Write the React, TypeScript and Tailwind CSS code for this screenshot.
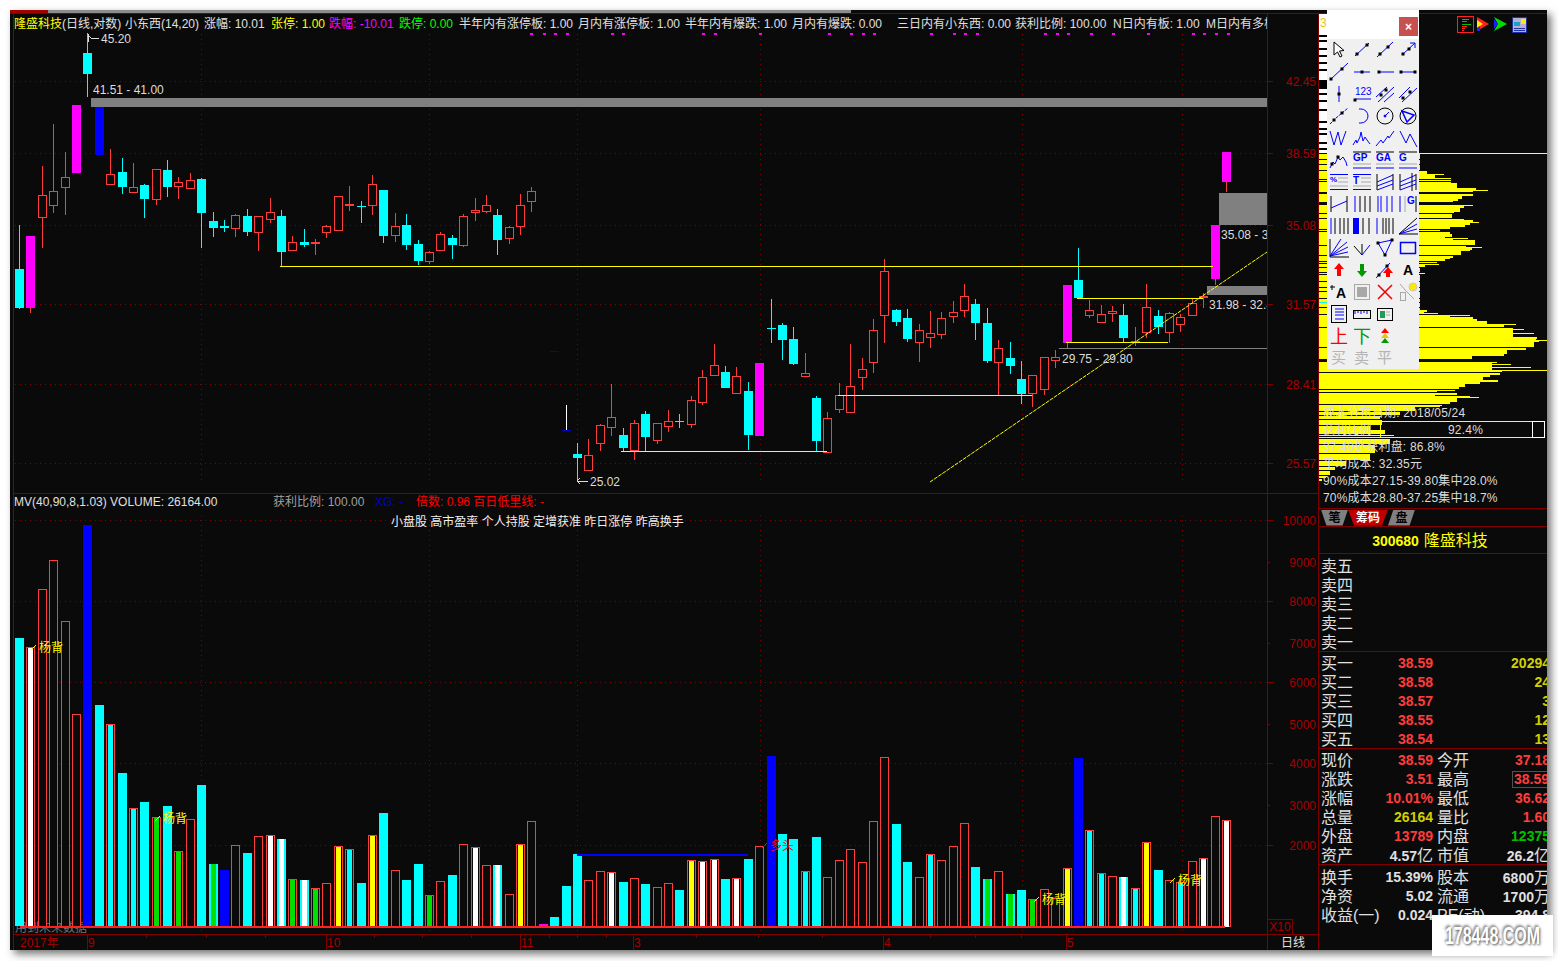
import type { ReactNode } from 'react';

const UP = '#ff3c3c';
const CYAN = '#00ffff';
const MAGENTA = '#ff00ff';
const BLUE = '#0000ff';
const GRID = '#800000';
const BG = '#0a0a0a';

// kind, body top, body bottom, wick top, wick bottom (page pixels); the index gives x
type Candle = ['c' | 'r' | 'm' | 'b' | 'x', number, number, number, number] | null;

const candles: Candle[] = [
  ['c', 269, 308, 225, 309], ['m', 236, 308, 236, 313], ['r', 195, 218, 166, 248], ['r', 191, 206, 124, 213],
  ['r', 177, 188, 152, 215], ['m', 105, 173, 105, 173], ['c', 53, 74, 33, 97], ['b', 107, 155, 107, 155],
  ['r', 174, 185, 149, 185], ['c', 172, 187, 158, 194], ['r', 187, 193, 163, 193], ['c', 185, 199, 184, 218],
  ['r', 169, 200, 169, 205], ['c', 170, 187, 160, 197], ['r', 182, 187, 177, 199], ['r', 180, 189, 173, 189],
  ['c', 179, 213, 178, 248], ['c', 221, 228, 212, 237], ['c', 226, 228, 220, 232], ['r', 215, 229, 214, 237],
  ['c', 216, 232, 209, 236], ['r', 216, 233, 216, 251], ['r', 212, 220, 198, 223], ['c', 216, 252, 210, 267],
  ['r', 242, 251, 236, 251], ['c', 242, 245, 229, 247], ['r', 242, 244, 239, 255], ['r', 226, 233, 225, 238],
  ['r', 196, 231, 196, 231], ['x', 204, 206, 186, 211], ['c', 206, 207, 201, 223], ['r', 184, 206, 175, 215],
  ['c', 190, 236, 190, 243], ['r', 226, 236, 213, 242], ['c', 225, 245, 214, 250], ['c', 244, 261, 240, 265],
  ['r', 252, 262, 251, 264], ['r', 234, 251, 232, 251], ['c', 238, 245, 235, 259], ['r', 216, 246, 214, 247],
  ['r', 210, 213, 198, 221], ['r', 205, 212, 195, 213], ['c', 215, 240, 209, 255], ['r', 227, 239, 226, 244],
  ['r', 205, 227, 194, 235], ['r', 191, 202, 187, 212], null, null, null,
  ['c', 454, 458, 443, 482], ['r', 455, 471, 439, 471], ['r', 425, 444, 424, 451], ['r', 417, 428, 384, 436],
  ['c', 435, 448, 428, 451], ['r', 423, 451, 420, 460], ['c', 414, 437, 411, 451], ['r', 423, 441, 423, 444],
  ['r', 421, 427, 410, 432], ['c', 421, 422, 414, 428], ['r', 400, 425, 396, 428], ['r', 377, 403, 370, 405],
  ['r', 365, 376, 344, 376], ['c', 372, 388, 366, 388], ['r', 376, 394, 367, 394], ['c', 391, 435, 382, 450],
  ['m', 363, 436, 363, 436], ['c', 328, 329, 299, 343], ['c', 325, 340, 323, 360], ['c', 339, 364, 327, 365],
  ['r', 373, 377, 353, 377], ['c', 398, 441, 396, 451], ['r', 418, 453, 412, 453], ['r', 395, 410, 383, 413],
  ['r', 386, 413, 344, 413], ['r', 369, 378, 358, 390], ['r', 330, 363, 319, 373], ['r', 271, 316, 259, 343],
  ['c', 310, 322, 309, 326], ['c', 318, 339, 309, 342], ['r', 330, 343, 324, 362], ['r', 333, 338, 311, 348],
  ['r', 318, 335, 312, 339], ['r', 312, 317, 301, 323], ['r', 296, 311, 284, 317], ['c', 304, 323, 299, 340],
  ['c', 323, 361, 308, 363], ['r', 348, 363, 340, 395], ['c', 358, 366, 342, 374], ['c', 379, 394, 361, 404],
  ['r', 375, 394, 375, 407], ['r', 357, 390, 357, 395], ['r', 357, 361, 350, 368], ['m', 285, 343, 285, 348],
  ['c', 280, 298, 248, 298], ['r', 310, 316, 300, 318], ['r', 314, 323, 305, 323], ['r', 311, 314, 306, 322],
  ['c', 315, 338, 304, 343], ['x', 341, 343, 327, 346], ['r', 307, 333, 284, 338], ['c', 316, 327, 310, 334],
  ['r', 313, 333, 312, 343], ['r', 317, 325, 314, 332], ['r', 303, 316, 298, 316], ['x', 296, 298, 293, 308],
  ['m', 225, 279, 225, 285], ['m', 152, 182, 152, 192],
];

type Vol = 'c' | 'r' | 'b' | 'm' | 'rw' | 'rc' | 'ry' | 'rg' | 'cg' | 'cw';

const volumes: [Vol, number][] = [
  ['c', 638], ['rw', 647], ['r', 589], ['r', 560], ['r', 621], ['r', 714], ['b', 525], ['c', 705], ['rc', 724],
  ['c', 773], ['rc', 808], ['c', 802], ['rg', 817], ['c', 806], ['rg', 851], ['r', 819], ['c', 785], ['cg', 864],
  ['b', 870], ['r', 845], ['c', 853], ['r', 836], ['rw', 835], ['cw', 839], ['rg', 879], ['cw', 880], ['rg', 888],
  ['r', 883], ['ry', 846], ['rc', 849], ['c', 883], ['ry', 835], ['c', 813], ['r', 870], ['c', 880], ['c', 864],
  ['rg', 895], ['r', 881], ['c', 875], ['r', 844], ['rw', 847], ['r', 865], ['cw', 865], ['r', 894], ['ry', 844],
  ['r', 821], ['m', 924], ['c', 917], ['c', 886], ['c', 854], ['r', 880], ['r', 871], ['rw', 872], ['c', 882],
  ['r', 878], ['c', 884], ['r', 887], ['r', 883], ['c', 890], ['ry', 860], ['rw', 861], ['rw', 859], ['c', 879],
  ['rw', 878], ['c', 859], ['r', 846], ['b', 756], ['c', 834], ['c', 839], ['rc', 871], ['c', 837], ['r', 877],
  ['r', 860], ['r', 849], ['r', 862], ['r', 821], ['r', 757], ['c', 824], ['c', 862], ['r', 877], ['rc', 854],
  ['r', 860], ['r', 846], ['r', 823], ['c', 867], ['cg', 879], ['r', 871], ['cg', 894], ['c', 890], ['rg', 899],
  ['r', 889], ['r', 898], ['ry', 868], ['b', 758], ['rc', 830], ['rc', 873], ['r', 876], ['cw', 877], ['rc', 888],
  ['ry', 842], ['c', 870], ['r', 880], ['rc', 882], ['r', 861], ['rw', 858], ['r', 816], ['rw', 820],
];

const innerFill: Record<string, string> = { w: '#ffffff', c: CYAN, y: '#ffff00', g: '#00e000' };

const gridX = [201, 429, 577, 760, 1022, 1182];
const priceGridY = [81, 153, 225, 304, 384, 463];
const volGridY = [520, 601, 682, 763, 845];
const signalDots = [530, 543, 554, 566, 611, 622, 702, 714, 759, 828, 850, 862, 873, 930, 953, 964, 976, 1044, 1056, 1067, 1090, 1112, 1147, 1192, 1203, 1215, 1227];

const headerItems = [
  { t: '隆盛科技', c: 'w-[48px] text-[#ffff00]' },
  { t: '(日线,对数)', c: 'w-[63px]' },
  { t: '小东西(14,20)', c: 'w-[79px]' },
  { t: '涨幅: 10.01', c: 'w-[67px]' },
  { t: '张停: 1.00', c: 'w-[58px] text-[#ffff00]' },
  { t: '跌幅: -10.01', c: 'w-[70px] text-[#ff00ff]' },
  { t: '跌停: 0.00', c: 'w-[60px] text-[#00ff00]' },
  { t: '半年内有涨停板: 1.00', c: 'w-[119px]' },
  { t: '月内有涨停板: 1.00', c: 'w-[107px]' },
  { t: '半年内有爆跌: 1.00', c: 'w-[107px]' },
  { t: '月内有爆跌: 0.00', c: 'w-[105px]' },
  { t: '三日内有小东西: 0.00', c: 'w-[118px]' },
  { t: '获利比例: 100.00', c: 'w-[98px]' },
  { t: 'N日内有板: 1.00', c: 'w-[93px]' },
  { t: 'M日内有多板: 1.00', c: 'w-[100px]' },
];

// y, height, right end of each yellow chip row
const chipRows: [number, number, number][] = [
  [154, 5, 1420], [160, 4, 1420], [165, 5, 1420], [171, 3, 1427], [174, 1, 1444], [175, 3, 1435], [178, 1, 1451],
  [180, 1, 1451], [182, 1, 1451], [183, 5, 1457], [188, 2, 1476], [190, 1, 1488], [191, 1, 1473], [194, 2, 1473],
  [196, 3, 1462], [199, 2, 1458], [201, 1, 1453], [205, 1, 1473], [206, 2, 1464], [208, 4, 1460], [212, 1, 1454],
  [214, 4, 1452], [219, 1, 1464], [220, 2, 1473], [222, 1, 1479], [223, 2, 1470], [225, 2, 1465], [227, 2, 1450],
  [230, 1, 1440], [232, 2, 1450], [234, 3, 1452], [237, 1, 1445], [239, 2, 1453], [238, 1, 1468], [240, 5, 1475],
  [246, 1, 1466], [247, 1, 1482], [248, 2, 1472], [250, 1, 1470], [251, 4, 1461], [256, 2, 1453], [258, 1, 1450],
  [259, 2, 1445], [262, 1, 1437], [264, 1, 1439], [265, 2, 1425], [268, 4, 1420], [273, 1, 1425], [275, 6, 1420],
  [282, 5, 1420], [288, 3, 1420], [292, 6, 1420], [299, 3, 1420], [303, 4, 1420], [308, 2, 1420], [310, 2, 1427],
  [312, 1, 1424], [313, 1, 1438], [315, 1, 1470], [316, 1, 1450], [317, 2, 1473], [319, 2, 1477], [321, 3, 1487],
  [324, 1, 1516], [325, 2, 1504], [328, 1, 1513], [329, 1, 1524], [330, 3, 1513], [333, 1, 1534], [334, 3, 1513],
  [337, 2, 1537], [339, 1, 1536], [340, 1, 1547], [341, 1, 1539], [342, 5, 1534], [348, 1, 1526], [349, 1, 1526],
  [350, 4, 1507], [354, 2, 1504], [356, 3, 1472], [362, 1, 1497], [363, 1, 1492], [364, 1, 1511], [365, 2, 1492],
  [367, 1, 1531], [368, 2, 1492], [370, 1, 1547], [371, 1, 1502], [373, 2, 1500], [375, 2, 1490], [377, 3, 1483],
  [380, 2, 1498], [382, 2, 1480], [384, 3, 1465], [387, 2, 1459], [390, 1, 1455], [391, 1, 1437], [393, 2, 1457],
  [395, 1, 1435], [396, 1, 1470], [397, 1, 1479], [398, 4, 1457], [402, 2, 1450], [405, 1, 1442], [406, 1, 1440],
  [407, 4, 1415], [412, 3, 1400], [416, 3, 1380], [420, 5, 1382], [426, 4, 1370], [430, 4, 1385], [435, 1, 1394],
  [437, 1, 1400], [439, 5, 1390], [445, 8, 1375], [454, 6, 1370], [461, 5, 1346], [467, 3, 1335], [471, 4, 1330],
  [476, 2, 1326], [479, 2, 1322],
];

const whiteGaps = [35, 40, 48, 55, 62, 69, 93, 100, 109, 121, 128, 133, 142, 148];

const bookSell = ['卖五', '卖四', '卖三', '卖二', '卖一'];
const bookBuy = [
  ['买一', '38.59', '20294'],
  ['买二', '38.58', '24'],
  ['买三', '38.57', '3'],
  ['买四', '38.55', '12'],
  ['买五', '38.54', '13'],
];

function candleLeft(i: number) {
  return Math.round(19.6 + i * 11.385 - 4.5);
}

function CandleMark({ candle, index }: { candle: Candle; index: number }) {
  if (!candle) return null;
  const [kind, top, bottom, wickTop, wickBottom] = candle;
  const x = candleLeft(index);
  const color = { c: CYAN, r: UP, m: MAGENTA, b: BLUE, x: UP }[kind];
  const wickColor = kind === 'm' ? UP : color;
  return (
    <g>
      {wickTop < top || wickBottom > bottom ? (
        <rect x={x + 4} y={wickTop} width={1} height={wickBottom - wickTop} fill={wickColor} />
      ) : null}
      {kind === 'r' ? (
        <rect x={x + 0.5} y={top + 0.5} width={8} height={bottom - top - 1} fill={BG} stroke={UP} />
      ) : (
        <rect x={x} y={top} width={9} height={bottom - top} fill={color} />
      )}
    </g>
  );
}

function VolumeBar({ kind, top, index }: { kind: Vol; top: number; index: number }) {
  const x = candleLeft(index);
  const inner = kind[1] ? innerFill[kind[1]] : null;
  const height = 926 - top;
  if (kind[0] === 'r') {
    return (
      <g>
        <rect x={x + 0.5} y={top + 0.5} width={8} height={height} fill={BG} stroke={UP} />
        {inner ? <rect x={x + 2} y={top + 1} width={5} height={height} fill={inner} /> : null}
      </g>
    );
  }
  const color = { c: CYAN, b: BLUE, m: MAGENTA }[kind[0] as 'c' | 'b' | 'm'];
  return (
    <g>
      <rect x={x} y={top} width={9} height={height} fill={color} />
      {inner ? <rect x={x + 2} y={top} width={5} height={height} fill={inner} /> : null}
    </g>
  );
}

function Grid({ ys, top, bottom }: { ys: number[]; top: number; bottom: number }) {
  return (
    <g stroke={GRID} strokeDasharray="1 4">
      {ys.map((y) => (
        <line key={y} x1={15} x2={1267} y1={y + 0.5} y2={y + 0.5} />
      ))}
      {gridX.map((x) => (
        <line key={x} x1={x + 0.5} x2={x + 0.5} y1={top} y2={bottom} />
      ))}
    </g>
  );
}

function PriceChart() {
  return (
    <svg className="block overflow-visible" width={1253} height={460} viewBox="14 33 1253 460" shapeRendering="crispEdges">
      <Grid ys={priceGridY} top={34} bottom={480} />
      {signalDots.map((x) => (
        <rect key={x} x={x} y={33} width={3} height={2} fill={MAGENTA} />
      ))}
      {candles.map((c, i) => (
        <CandleMark key={i} candle={c} index={i} />
      ))}
      <rect x={550} y={351} width={9} height={1} fill="#0000c0" />
      <rect x={566} y={405} width={1} height={25} fill="#ffffff" />
      <rect x={562} y={430} width={9} height={1} fill="#0000c0" />

      <rect x={91} y={98} width={1176} height={9} fill="#808080" />
      <rect x={1219} y={193} width={48} height={32} fill="#808080" />
      <rect x={1207} y={286} width={60} height={9} fill="#808080" />

      <g fill="#ffff00">
        <rect x={280} y={266} width={933} height={1} />
        <rect x={1077} y={298} width={126} height={1} />
        <rect x={1066} y={342} width={102} height={1} />
        <rect x={838} y={395} width={194} height={1} />
        <rect x={621} y={451} width={206} height={1} />
      </g>
      <rect x={1059} y={348} width={208} height={1} fill="#808080" />
      <line x1={930} y1={482} x2={1267} y2={252} stroke="#ffff00" shapeRendering="auto" strokeDasharray="4 1" />

      <g fill="#dcdcdc" fontSize={12} dominantBaseline="central" shapeRendering="auto">
        <text x={101} y={39}>45.20</text>
        <text x={93} y={90}>41.51 - 41.00</text>
        <text x={1062} y={359}>29.75 - 29.80</text>
        <text x={590} y={482}>25.02</text>
        <svg x={1221} y={225} width={46} height={18} viewBox="1221 225 46 18" overflow="hidden">
          <text x={1221} y={235}>35.08 - 35.30</text>
        </svg>
        <svg x={1209} y={295} width={58} height={18} viewBox="1209 295 58 18" overflow="hidden">
          <text x={1209} y={305}>31.98 - 32.40</text>
        </svg>
      </g>
      <path d="M88.5 34v8M88.5 36l4 3M93 38h6" stroke="#dcdcdc" fill="none" />
      <path d="M577 481h11M577 481l3-3M577 481l3 3" stroke="#dcdcdc" fill="none" />
    </svg>
  );
}

function Yang({ x, y, text = '杨背', color = '#ffff00' }: { x: number; y: number; text?: string; color?: string }) {
  return (
    <g>
      <path d={`M${x - 8} ${y + 3}L${x - 3} ${y - 2}`} stroke={color} fill="none" shapeRendering="auto" />
      <text x={x} y={y + 1} fill={color} fontSize={12} dominantBaseline="central" shapeRendering="auto">
        {text}
      </text>
    </g>
  );
}

function VolumeChart() {
  return (
    <svg className="block" width={1253} height={422} viewBox="14 512 1253 422" shapeRendering="crispEdges">
      <Grid ys={volGridY} top={515} bottom={934} />
      <text x={15} y={928} fill="#707070" fontSize={12} dominantBaseline="central">
        用到未来数据
      </text>
      {volumes.map(([kind, top], i) => (
        <VolumeBar key={i} kind={kind} top={top} index={i} />
      ))}
      <rect x={20} y={926} width={1205} height={2} fill="#ff2020" />
      <rect x={577} y={854} width={171} height={1.5} fill={BLUE} />
      <Yang x={39} y={647} />
      <Yang x={163} y={818} />
      <Yang x={1042} y={899} />
      <Yang x={1178} y={880} />
      <Yang x={770} y={845} text="多头" color="#ff0000" />
    </svg>
  );
}

function AxisSvg({ top, height, ticks }: { top: number; height: number; ticks: [number, string, boolean][] }) {
  return (
    <svg className="block" width={50} height={height} viewBox={`1268 ${top} 50 ${height}`}>
      {ticks.map(([y, label, major]) => (
        <g key={label}>
          <rect x={1268} y={y} width={major ? 5 : 2} height={1} fill={GRID} />
          <text x={1316} y={y + 1} textAnchor="end" dominantBaseline="central" fontSize={12} fill="#a80000">
            {label}
          </text>
        </g>
      ))}
    </svg>
  );
}

function TimeAxis() {
  const months: [number, string][] = [[87, '9'], [326, '10'], [520, '11'], [633, '3'], [883, '4'], [1066, '5']];
  const minor = [146, 206, 265, 374, 422, 471, 549, 577, 606, 696, 758, 822, 930, 975, 1021];
  return (
    <svg className="block" width={1253} height={15} viewBox="14 935 1253 15" shapeRendering="crispEdges">
      <text x={20} y={943} fill="#a80000" fontSize={12} dominantBaseline="central">2017年</text>
      {months.map(([x, label]) => (
        <g key={label}>
          <rect x={x} y={935} width={1} height={15} fill={GRID} />
          <text x={x + 1} y={943} fill="#a80000" fontSize={12} dominantBaseline="central">{label}</text>
        </g>
      ))}
      {minor.map((x) => (
        <rect key={x} x={x} y={935} width={1} height={3} fill={GRID} />
      ))}
    </svg>
  );
}

function Dot({ x, y }: { x: number; y: number }) {
  return <rect x={x - 1.5} y={y - 1.5} width={3} height={3} fill="#000" stroke="none" />;
}

function Label({ x = 1, y = 11, size = 10, color = BLUE, bold = true, children }: { x?: number; y?: number; size?: number; color?: string; bold?: boolean; children: ReactNode }) {
  return (
    <text x={x} y={y} fontSize={size} fill={color} stroke="none" fontWeight={bold ? 700 : 400}>
      {children}
    </text>
  );
}

const K = '#000000';
const G = '#a8a8a8';

const toolIcons: ReactNode[] = [
  <path d="M5 2v13l3.5-3 2.5 5 2-1-2.5-5 4.5-.5z" stroke={K} fill="#fff" />,
  <><path d="M3 16L17 3" /><Dot x={5} y={14} /><Dot x={15} y={5} /></>,
  <><path d="M2 17L18 2" /><Dot x={5} y={14} /><Dot x={13} y={7} /></>,
  <><path d="M4 15L17 3M12 3h5v5" /><Dot x={5} y={14} /><Dot x={11} y={9} /></>,
  <><path d="M1 18L19 1" /><Dot x={2} y={17} /><Dot x={13} y={7} /></>,
  <><path d="M2 10h16" /><Dot x={10} y={10} /></>,
  <><path d="M5 10h14" /><Dot x={4} y={10} /></>,
  <><path d="M3 10h14" /><Dot x={3} y={10} /><Dot x={17} y={10} /></>,
  <><path d="M10 2v16" stroke={BLUE} /><Dot x={10} y={10} /></>,
  <><Label x={3} y={11} size={10} bold={false}>123</Label><path d="M3 15h16" /><Dot x={3} y={16} /></>,
  <><path d="M1 13L12 3M3 18L19 3M9 18L19 9" /><Dot x={6} y={11} /><Dot x={11} y={6} /></>,
  <><path d="M1 14L12 3M4 18L19 4" /><Dot x={5} y={14} /><Dot x={12} y={8} /></>,
  <><path d="M1 18L7 12M13 7L19 2M7 12L13 7" strokeDasharray="3 1" /><Dot x={5} y={14} /><Dot x={13} y={7} /></>,
  <path d="M7 3h2A7 7 0 0 1 9 17H7" />,
  <><circle cx={10} cy={10} r={8} stroke={K} /><path d="M10 10L14 6" /><circle cx={10} cy={10} r={1} fill={BLUE} /></>,
  <><circle cx={10} cy={10} r={8} stroke={K} /><path d="M4 5L16 9L9 16Z" strokeWidth={1.5} /></>,
  <path d="M1 3l4 14 4-13 3 13 5-14" />,
  <path d="M1 17l3-5 1 3 3-6 1-5 2 9 2-4 2 3 3 4" />,
  <path d="M1 18l5-6 2 3 5-7 1 2 5-7" />,
  <path d="M2 3l6 12 4-9 7 13" />,
  <><path d="M1 18l3-6 2 2 3-7 2 3 3-3 3 5 1 4" /><Dot x={9} y={7} /><Dot x={3} y={14} /></>,
  <><path d="M1 2h18" stroke={K} /><Label y={11}>GP</Label><path d="M1 14h18" stroke={G} /><path d="M1 18h18" /></>,
  <><path d="M1 2h18" stroke={K} /><Label y={11}>GA</Label><path d="M1 14h18" stroke={G} /><path d="M1 18h18" /></>,
  <><path d="M1 2h18" stroke={K} /><Label y={11}>G</Label><path d="M1 14h18" stroke={G} /><path d="M1 18h18" /></>,
  <><path d="M1 2.5h18M1 17.5h18" /><Label y={10} size={8}>%</Label><path d="M9 6h10M9 10h10M1 14h18" stroke={G} /></>,
  <><path d="M1 2.5h18M1 17.5h18" /><Label y={12} size={10}>T</Label><path d="M9 6h10M9 10h10M1 14h18" stroke={G} /></>,
  <><path d="M2 2v16M18 2v16" stroke={K} /><path d="M2 10L18 3M2 14L18 8M2 18L18 12" /></>,
  <><path d="M2 2v16M18 2v16M14 1v18" stroke={K} /><path d="M2 10L18 3M2 14L18 8M2 18L18 12" /></>,
  <><path d="M2 2v16M18 2v16" stroke={K} /><path d="M2 14L18 7" /></>,
  <><path d="M3 2v16" /><path d="M8 2v16M13 2v16M18 2v16" stroke={K} /></>,
  <path d="M3 2v16M6 2v16M12 2v16M17 2v16" />,
  <><path d="M2 2v16" /><path d="M7 2v16" stroke={G} /><Label x={9} y={10}>G</Label><path d="M18 2v16" stroke={K} /></>,
  <><path d="M2 2v16" /><path d="M6 2v16M11 2v16M15 2v16M19 2v16" stroke={K} /></>,
  <><path d="M2 2v16M4 2v16M6 2v16" strokeWidth={2} /><path d="M11 2v16M17 2v16" stroke={K} /></>,
  <><path d="M2 2v16" /><path d="M8 2v16M11 2v16M14 2v16M18 2v16" stroke={K} /></>,
  <><path d="M1 18L19 2M1 18h19" stroke={K} /><path d="M1 18L19 8M1 18L19 13" /></>,
  <><path d="M1 1v18h19" stroke={K} /><path d="M1 18L12 1M1 18L18 4M1 18L19 9M1 18L19 14" /></>,
  <><path d="M10 17V6M10 17L2 8" stroke={K} /><path d="M10 17L18 7" /></>,
  <><path d="M3 5L17 2L10 17Z" /><Dot x={3} y={5} /><Dot x={17} y={2} /><Dot x={10} y={17} /></>,
  <rect x={2.5} y={4.5} width={15} height={11} strokeWidth={1.5} />,
  <path d="M10 3l5 6h-3v7H8V9H5z" fill="#ff0000" stroke="none" />,
  <path d="M10 17l5-6h-3V4H8v7H5z" fill="#009a00" stroke="none" />,
  <><path d="M1 18L15 3" /><Dot x={4} y={15} /><Dot x={12} y={6} /><path d="M13 7l5 6h-3v4h-4v-4H8z" fill="#ff0000" stroke="none" /></>,
  <Label x={5} y={15} size={14} color={K}>A</Label>,
  <><Label x={7} y={16} size={14} color={K}>A</Label><path d="M3 3v5M1 5h5" stroke={K} /></>,
  <><rect x={2.5} y={2.5} width={15} height={15} stroke={G} fill="#f0f0f0" /><rect x={5} y={5} width={10} height={10} fill={G} stroke="none" /></>,
  <path d="M3 3L17 17M17 3L3 17" stroke="#f00000" strokeWidth={1.5} />,
  <><rect x={2.5} y={10.5} width={5} height={8} stroke={G} /><path d="M8 9L16 17M2 2L8 9" stroke={G} /><circle cx={15} cy={5} r={4} fill="#ffe800" stroke="#c8c8c8" /></>,
  <><rect x={2.5} y={1.5} width={15} height={17} stroke={K} /><path d="M6 5h9M6 8h9M6 11h9M6 15h9" /></>,
  <><rect x={1.5} y={6.5} width={17} height={8} stroke={K} /><path d="M3 7v3M6 7v2M9 7v3M12 7v2M15 7v3" stroke={BLUE} /></>,
  <><rect x={2.5} y={4.5} width={15} height={12} stroke={K} /><rect x={5} y={7} width={5} height={7} fill="#1f9d55" stroke="none" /><path d="M11 8h4M11 11h4" stroke={G} /></>,
  null,
  <Label x={1} y={17} size={18} color="#ff0000" bold={false}>上</Label>,
  <Label x={1} y={17} size={18} color="#009a00" bold={false}>下</Label>,
  <><path d="M10 2l4 5H6z" fill="#ff0000" stroke="none" /><path d="M10 7l4 5H6z" fill="#e8c800" stroke="none" /><path d="M10 12l4 5H6z" fill="#009a00" stroke="none" /></>,
  null,
  <Label x={2} y={15} size={15} color="#b4b4b4" bold={false}>买</Label>,
  <Label x={2} y={15} size={15} color="#b4b4b4" bold={false}>卖</Label>,
  <Label x={2} y={15} size={15} color="#b4b4b4" bold={false}>平</Label>,
  null,
];

function Toolbar() {
  return (
    <div className="absolute left-[1317px] top-0 w-[92px] bg-[#f0f0f0]">
      <div className="flex h-[29px] justify-end bg-white pt-[7px] pr-[1px]">
        <div className="flex h-[19px] w-[19px] items-center justify-center bg-[#c75050] text-[12px] font-bold text-white">×</div>
      </div>
      <div className="grid auto-rows-[22px] grid-cols-[repeat(4,23px)]">
        {toolIcons.map((icon, i) => (
          <div key={i} className="flex items-center justify-center">
            {icon ? (
              <svg width={20} height={20} viewBox="0 0 20 20" fill="none" stroke={BLUE}>
                {icon}
              </svg>
            ) : null}
          </div>
        ))}
      </div>
    </div>
  );
}

function ChipChart() {
  return (
    <svg className="absolute inset-0 block" width={229} height={495} viewBox="1319 14 229 495" shapeRendering="crispEdges">
      <rect x={1319} y={14} width={9} height={139} fill="#ffffff" />
      <rect x={1319} y={80} width={9} height={9} fill="#000" />
      {whiteGaps.map((y) => (
        <rect key={y} x={1319} y={y} width={9} height={1.5} fill="#000" />
      ))}
      <text x={1320} y={23} fontSize={12} fill="#e8c800" dominantBaseline="central">3</text>
      <rect x={1419} y={153} width={128} height={1} fill="#e8e8e8" />
      {chipRows.map(([y, h, end], i) => (
        <rect key={i} x={1319} y={y} width={end - 1319} height={h} fill="#ffff00" />
      ))}
      <rect x={1319} y={302} width={9} height={1} fill={CYAN} />
    </svg>
  );
}

function TopIcons() {
  return (
    <div className="absolute left-[138px] top-[2px] flex items-center">
      <svg width={17} height={17} viewBox="0 0 17 17" fill="none" shapeRendering="crispEdges">
        <rect x={0.5} y={0.5} width={16} height={16} stroke="#ff2020" />
        <path d="M5 3h7M5 5h5" stroke="#00c000" />
        <path d="M5 8h9" stroke="#00c000" />
        <path d="M5 10h5M5 12h3M5 14h2" stroke="#ff2020" />
      </svg>
      <svg className="ml-[3px]" width={13} height={15} viewBox="0 0 13 15">
        <path d="M0 0L12 7L0 14Z" fill="#ff2020" />
        <path d="M0 3L6 7L0 11Z" fill="#ffe800" />
        <path d="M0 11L3 9V14L0 14Z" fill="#2020ff" />
      </svg>
      <svg className="ml-[4px]" width={13} height={15} viewBox="0 0 13 15">
        <path d="M0 0L13 7L0 14L4 7Z" fill="#00e000" />
        <path d="M0 2L4 7L0 12Z" fill="#2020ff" />
      </svg>
      <svg className="ml-[5px]" width={15} height={16} viewBox="0 0 15 16" shapeRendering="crispEdges">
        <rect width={15} height={16} fill="#b0b0d8" />
        <rect x={0.5} y={0.5} width={14} height={15} fill="none" stroke="#2030a0" />
        <rect x={9} y={2} width={5} height={5} fill="#ffe800" />
        <rect x={2} y={5} width={6} height={4} fill="#20a0c0" />
        <path d="M2 11h11M2 13h11" stroke="#2030a0" />
      </svg>
    </div>
  );
}

function Money({ value, unit }: { value: string; unit: string }) {
  return (
    <>
      {value}
      <span className="text-[16px] font-normal">{unit}</span>
    </>
  );
}

function QuoteRow({
  left, leftValue, leftClass = 'text-[#ff3c3c]', right, rightValue, rightClass = 'text-[#ff3c3c]', boxed = false,
}: {
  left: string; leftValue: ReactNode; leftClass?: string; right: string; rightValue: ReactNode; rightClass?: string; boxed?: boolean;
}) {
  return (
    <div className="flex h-[19px] shrink-0 items-center pl-[2px]">
      <div className="flex w-[112px] shrink-0 items-center justify-between">
        <span className="text-[16px] text-[#e0e0e0]">{left}</span>
        <span className={`text-[14px] font-bold ${leftClass}`}>{leftValue}</span>
      </div>
      <div className="ml-[4px] flex w-[113px] shrink-0 items-center justify-between">
        <span className="text-[16px] text-[#e0e0e0]">{right}</span>
        <span className={boxed ? `border border-[#505050] pl-[1px] text-[14px] leading-[15px] font-bold ${rightClass}` : `text-[14px] font-bold ${rightClass}`}>
          {rightValue}
        </span>
      </div>
    </div>
  );
}

function QuotePanel() {
  return (
    <div className="w-[229px] shrink-0 overflow-hidden border-l border-[#800000]">
      <div className="relative h-[495px] border-b border-[#800000]">
        <ChipChart />
        <TopIcons />
        <div className="absolute top-[390px] left-[4px] w-[224px] text-[12px] tracking-[0.2px] text-[#dcdcdc]">
          <div className="flex h-[17px] items-center">成本分布日期: 2018/05/24</div>
          <div className="flex h-[17px] items-center">
            <span className="w-[57px]">获利比例</span>
            <div className="flex h-[17px] w-[165px]">
              <div className="flex w-[152px] items-center justify-center border border-r-0 border-[#ffff00] pl-[18px]">92.4%</div>
              <div className="w-[13px] border border-white" />
            </div>
          </div>
          <div className="flex h-[17px] items-center">37.40处获利盘: 86.8%</div>
          <div className="flex h-[17px] items-center">平均成本: 32.35元</div>
          <div className="flex h-[17px] items-center">90%成本27.15-39.80集中28.0%</div>
          <div className="flex h-[17px] items-center">70%成本28.80-37.25集中18.7%</div>
        </div>
      </div>

      <div className="flex h-[18px] items-center border-b border-[#800000] pl-[2px] text-[12px] font-bold">
        <div className="flex h-[16px] w-[27px] items-center justify-center bg-[#808080] text-black [clip-path:polygon(0_0,100%_0,80%_100%,20%_100%)]">笔</div>
        <div className="flex h-[16px] w-[40px] items-center justify-center bg-[#c00000] text-white [clip-path:polygon(0_0,100%_0,85%_100%,15%_100%)]">筹码</div>
        <div className="flex h-[16px] w-[27px] items-center justify-center bg-[#808080] text-black [clip-path:polygon(20%_0,100%_0,80%_100%,0_100%)]">盘</div>
      </div>

      <div className="flex h-[27px] items-center justify-center border-b border-[#800000] pt-[2px] pr-[6px] text-[#ffff00]">
        <span className="text-[14px] font-bold">300680</span>
        <span className="ml-[5px] text-[16px]">隆盛科技</span>
      </div>

      <div className="flex h-[98px] flex-col border-b border-[#800000] pt-[3px] pl-[2px] text-[16px] text-[#e0e0e0]">
        {bookSell.map((label) => (
          <div key={label} className="flex h-[19px] shrink-0 items-center">{label}</div>
        ))}
      </div>

      <div className="flex h-[97px] flex-col border-b border-[#800000] pt-[2px] pl-[2px]">
        {bookBuy.map(([label, price, size]) => (
          <div key={label} className="flex h-[19px] shrink-0 items-center">
            <div className="flex w-[112px] shrink-0 items-center justify-between">
              <span className="text-[16px] text-[#e0e0e0]">{label}</span>
              <span className="text-[14px] font-bold text-[#ff3c3c]">{price}</span>
            </div>
            <span className="ml-[4px] w-[113px] shrink-0 text-right text-[14px] font-bold text-[#d0d000]">{size}</span>
          </div>
        ))}
      </div>

      <div className="flex h-[116px] flex-col border-b border-[#800000] pt-[2px]">
        <QuoteRow left="现价" leftValue="38.59" right="今开" rightValue="37.18" />
        <QuoteRow left="涨跌" leftValue="3.51" right="最高" rightValue="38.59" boxed />
        <QuoteRow left="涨幅" leftValue="10.01%" right="最低" rightValue="36.62" />
        <QuoteRow left="总量" leftValue="26164" leftClass="text-[#d0d000]" right="量比" rightValue="1.60" />
        <QuoteRow left="外盘" leftValue="13789" right="内盘" rightValue="12375" rightClass="text-[#00c000]" />
        <QuoteRow
          left="资产"
          leftValue={<Money value="4.57" unit="亿" />}
          leftClass="text-[#e0e0e0]"
          right="市值"
          rightValue={<Money value="26.2" unit="亿" />}
          rightClass="text-[#e0e0e0]"
        />
      </div>

      <div className="flex flex-col pt-[3px]">
        <QuoteRow left="换手" leftValue="15.39%" leftClass="text-[#e0e0e0]" right="股本" rightValue={<Money value="6800" unit="万" />} rightClass="text-[#e0e0e0]" />
        <QuoteRow left="净资" leftValue="5.02" leftClass="text-[#e0e0e0]" right="流通" rightValue={<Money value="1700" unit="万" />} rightClass="text-[#e0e0e0]" />
        <QuoteRow left="收益(一)" leftValue="0.024" leftClass="text-[#e0e0e0]" right="PE(动)" rightValue="394.8" rightClass="text-[#e0e0e0]" />
      </div>
    </div>
  );
}

export default function App() {
  const priceTicks: [number, string, boolean][] = [
    [81, '42.45', true], [153, '38.59', true], [225, '35.08', true], [304, '31.57', true], [384, '28.41', true], [463, '25.57', true],
  ];
  const volTicks: [number, string, boolean][] = [
    [520, '10000', true], [562, '9000', false], [601, '8000', true], [643, '7000', false], [682, '6000', true],
    [724, '5000', false], [763, '4000', true], [805, '3000', false], [845, '2000', true],
  ];

  return (
    <div className="relative h-[961px] w-[1558px] overflow-hidden bg-white pt-[10px] pl-[10px] font-['Liberation_Sans','Noto_Sans_CJK_SC',sans-serif]">
      <div className="relative flex h-[940px] w-[1537px] flex-col bg-[#0a0a0a] shadow-[4px_4px_8px_rgba(0,0,0,0.55)]">
        <div className="flex h-[3px] shrink-0">
          <div className="w-[38px] bg-[#a00000]" />
          <div className="w-[803px] bg-[#8c8c8c]" />
        </div>

        <div className="flex h-[937px] border-t border-[#800000] pl-[3px]">
          <div className="flex w-[1305px] shrink-0 flex-col border-l border-[#8a0000]">
            <div className="flex h-[480px] shrink-0 border-b border-[#800000]">
              <div className="w-[1253px] shrink-0">
                <div className="flex h-[19px] items-center overflow-hidden text-[12px] whitespace-nowrap text-[#e0e0e0]">
                  {headerItems.map((item) => (
                    <span key={item.t} className={`shrink-0 ${item.c}`}>{item.t}</span>
                  ))}
                </div>
                <PriceChart />
              </div>
              <div className="w-[51px] border-l border-[#800000]">
                <AxisSvg top={14} height={479} ticks={priceTicks} />
              </div>
            </div>

            <div className="flex h-[441px] shrink-0 border-b border-[#800000]">
              <div className="w-[1253px] shrink-0">
                <div className="flex h-[18px] items-center pb-[2px] text-[12px] whitespace-nowrap">
                  <span className="w-[259px] text-[#e0e0e0]">MV(40,90,8,1.03) VOLUME: 26164.00</span>
                  <span className="w-[102px] text-[#a0a0a0]">获利比例: 100.00</span>
                  <span className="w-[41px] text-[#0000d0]">XG: -</span>
                  <span className="text-[#ff0000]">倍数: 0.96 百日低里线: -</span>
                </div>
                <div className="relative">
                  <VolumeChart />
                  <div className="absolute top-[1px] left-[377px] flex h-[18px] items-center text-[12px] whitespace-nowrap text-[#f0f0f0]">
                    小盘股 高市盈率 个人持股 定增获准 昨日涨停 昨高换手
                  </div>
                </div>
              </div>
              <div className="relative w-[51px] border-l border-[#800000]">
                <AxisSvg top={494} height={440} ticks={volTicks} />
                <div className="absolute bottom-0 left-0 flex h-[15px] w-[25px] items-center justify-center border-t border-r border-[#800000] text-[12px] text-[#a80000]">X10</div>
              </div>
            </div>

            <div className="flex h-[15px] shrink-0">
              <div className="w-[1253px] shrink-0">
                <TimeAxis />
              </div>
              <div className="flex w-[51px] items-center justify-center border-l border-[#800000] text-[12px] text-[#e0e0e0]">日线</div>
            </div>
          </div>

          <QuotePanel />
        </div>

        <Toolbar />
      </div>

      <div className="absolute top-[915px] left-[1432px] flex h-[41px] w-[121px] items-center justify-center bg-white">
        <span className="scale-y-[1.5] text-[16px] font-bold text-white [text-shadow:1px_1px_2px_#555,-1px_-1px_2px_#888]">178448.COM</span>
      </div>
    </div>
  );
}
